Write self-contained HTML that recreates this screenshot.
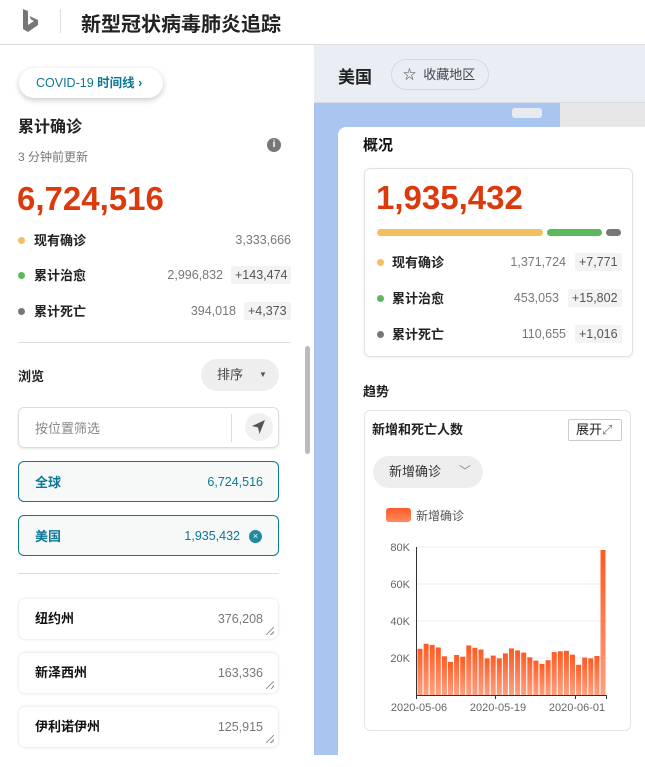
<!DOCTYPE html><html><head><meta charset="utf-8"><style>
*{margin:0;padding:0;box-sizing:border-box}
body{width:645px;height:755px;overflow:hidden;background:#fff;font-family:"Liberation Sans","Noto Sans CJK SC",sans-serif;position:relative;color:#111}
.a{position:absolute}
.hdr{left:0;top:0;width:645px;height:45px;border-bottom:1px solid #ddd;background:#fff}
.dot{display:inline-block;width:7px;height:7px;border-radius:50%;position:absolute;left:18px}
.lbl{position:absolute;font-size:13px;font-weight:bold;color:#222}
.num{position:absolute;font-size:12.5px;color:#777;text-align:right}
.dl{position:absolute;font-size:12.5px;color:#555;background:#f3f3f3;padding:2px 4px;border-radius:2px}
.box{position:absolute;border-radius:6px;background:#fff}
.rz{position:absolute;right:4px;bottom:4px;width:8px;height:8px;background:linear-gradient(135deg,transparent 45%,#999 45%,#999 55%,transparent 55%,transparent 75%,#999 75%,#999 85%,transparent 85%)}
</style></head><body>
<div class="a hdr">
<svg class="a" style="left:22px;top:9px" width="18" height="24" viewBox="0 0 18 24"><path d="M1 0 L6 2 V16 L12 12 L9 10.5 L7.5 7 L16 11 V16 L6 23 L1 20 Z" fill="#777"/></svg>
<div class="a" style="left:60px;top:9px;width:1px;height:24px;background:#ddd"></div>
<div class="a" style="left:81px;top:8px;font-size:20px;font-weight:bold;color:#222">新型冠状病毒肺炎追踪</div>
</div>
<div class="a" style="left:19px;top:68px;width:144px;height:30px;border-radius:15px;background:#fff;box-shadow:0 2px 6px rgba(0,0,0,.22);font-size:12.5px;color:#0b7894;line-height:30px;padding-left:17px;font-weight:bold"><span style="font-weight:normal">COVID-19</span> 时间线 ›</div>
<div class="a" style="left:18px;top:113px;font-size:16px;font-weight:bold;color:#222">累计确诊</div>
<div class="a" style="left:18px;top:148px;font-size:12px;color:#777">3 分钟前更新</div>
<div class="a" style="left:267px;top:138px;width:14px;height:14px;border-radius:50%;background:#777;color:#fff;font-size:10px;text-align:center;line-height:14px;font-weight:bold">i</div>
<div class="a" style="left:17px;top:180px;font-size:33px;font-weight:bold;color:#db3a0d">6,724,516</div>
<span class="dot" style="top:237px;background:#f2c063"></span><div class="lbl" style="left:34px;top:230px">现有确诊</div><div class="num" style="right:354px;top:233px">3,333,666</div>
<span class="dot" style="top:272px;background:#5cb85c"></span><div class="lbl" style="left:34px;top:265px">累计治愈</div><div class="num" style="right:422px;top:268px">2,996,832</div><div class="dl" style="left:231px;top:266px">+143,474</div>
<span class="dot" style="top:308px;background:#777"></span><div class="lbl" style="left:34px;top:301px">累计死亡</div><div class="num" style="right:409px;top:304px">394,018</div><div class="dl" style="left:244px;top:302px">+4,373</div>
<div class="a" style="left:18px;top:342px;width:272px;height:1px;background:#ddd"></div>
<div class="lbl" style="left:18px;top:366px">浏览</div>
<div class="a" style="left:201px;top:359px;width:78px;height:32px;border-radius:16px;background:#eee;font-size:13px;color:#444;line-height:32px;padding-left:16px">排序<span style="position:absolute;left:58px;top:0;font-size:8px;color:#555">▼</span></div>
<div class="box" style="left:18px;top:407px;width:261px;height:41px;border:1px solid #ddd;box-shadow:0 1px 2px rgba(0,0,0,.1)">
<div class="a" style="left:16px;top:10px;font-size:13px;color:#888">按位置筛选</div>
<div class="a" style="left:212px;top:6px;width:1px;height:28px;background:#ddd"></div>
<div class="a" style="left:226px;top:5px;width:28px;height:28px;border-radius:50%;background:#f0f0f0"><svg width="28" height="28" viewBox="0 0 28 28"><path d="M20 7 L7 13 L13 14.5 L14.5 21 Z" fill="#555"/></svg></div>
</div>
<div class="box" style="left:18px;top:461px;width:261px;height:41px;border:1px solid #0b7894;background:#f7f9f9"><div class="a" style="left:16px;top:10px;font-size:13px;font-weight:bold;color:#0b7894">全球</div><div class="a" style="right:15px;top:13px;font-size:12.5px;color:#0b7894">6,724,516</div></div>
<div class="box" style="left:18px;top:515px;width:261px;height:41px;border:1px solid #0b7894;background:#f7f9f9"><div class="a" style="left:16px;top:10px;font-size:13px;font-weight:bold;color:#0b7894">美国</div><div class="a" style="right:38px;top:13px;font-size:12.5px;color:#0b7894">1,935,432</div><div class="a" style="left:230px;top:14px;width:13px;height:13px;border-radius:50%;background:#1f8aa0;color:#fff;font-size:9px;text-align:center;line-height:13px">×</div></div>
<div class="a" style="left:18px;top:573px;width:261px;height:1px;background:#ddd"></div>
<div class="box" style="left:19px;top:599px;width:259px;height:40px;box-shadow:0 0 3px rgba(0,0,0,.15)"><div class="a" style="left:16px;top:9px;font-size:13px;font-weight:bold">纽约州</div><div class="a" style="right:15px;top:13px;font-size:12.5px;color:#777">376,208</div><div class="rz"></div></div>
<div class="box" style="left:19px;top:653px;width:259px;height:40px;box-shadow:0 0 3px rgba(0,0,0,.15)"><div class="a" style="left:16px;top:9px;font-size:13px;font-weight:bold">新泽西州</div><div class="a" style="right:15px;top:13px;font-size:12.5px;color:#777">163,336</div><div class="rz"></div></div>
<div class="box" style="left:19px;top:707px;width:259px;height:40px;box-shadow:0 0 3px rgba(0,0,0,.15)"><div class="a" style="left:16px;top:9px;font-size:13px;font-weight:bold">伊利诺伊州</div><div class="a" style="right:15px;top:13px;font-size:12.5px;color:#777">125,915</div><div class="rz"></div></div>
<div class="a" style="left:305px;top:346px;width:5px;height:108px;border-radius:3px;background:#bbb"></div>
<div class="a" style="left:314px;top:45px;width:331px;height:710px;background:#a9c6f1"></div>
<div class="a" style="left:314px;top:45px;width:331px;height:58px;background:#e9eef5;border-bottom:1px solid #d8dde4"></div>
<div class="a" style="left:560px;top:103px;width:85px;height:24px;background:#e6e7e6"></div>
<div class="a" style="left:512px;top:108px;width:30px;height:10px;background:#e9ecef;border-radius:3px"></div>
<div class="a" style="left:338px;top:63px;font-size:17px;font-weight:bold;color:#222">美国</div>
<div class="a" style="left:391px;top:59px;width:98px;height:31px;border-radius:16px;border:1px solid #d5d8dc;font-size:13px;color:#444;line-height:29px;padding-left:11px">☆&nbsp; 收藏地区</div>
<div class="a" style="left:338px;top:127px;width:320px;height:640px;background:#fff;border-radius:8px"></div>
<div class="a" style="left:363px;top:134px;font-size:15px;font-weight:bold;color:#111">概况</div>
<div class="box" style="left:364px;top:168px;width:269px;height:189px;border:1px solid #e2e2e2;box-shadow:0 1px 3px rgba(0,0,0,.06)">
<div class="a" style="left:11px;top:10px;font-size:33px;font-weight:bold;color:#db3a0d">1,935,432</div>
<div class="a" style="left:12px;top:60px;width:166px;height:7px;border-radius:4px;background:#f2c063"></div>
<div class="a" style="left:182px;top:60px;width:55px;height:7px;border-radius:4px;background:#5cb85c"></div>
<div class="a" style="left:241px;top:60px;width:15px;height:7px;border-radius:4px;background:#777"></div>
<span class="dot" style="left:12px;top:90px;background:#f2c063"></span><div class="lbl" style="left:27px;top:83px">现有确诊</div><div class="num" style="right:66px;top:86px">1,371,724</div><div class="dl" style="left:210px;top:84px">+7,771</div>
<span class="dot" style="left:12px;top:126px;background:#5cb85c"></span><div class="lbl" style="left:27px;top:119px">累计治愈</div><div class="num" style="right:73px;top:122px">453,053</div><div class="dl" style="left:203px;top:120px">+15,802</div>
<span class="dot" style="left:12px;top:162px;background:#777"></span><div class="lbl" style="left:27px;top:155px">累计死亡</div><div class="num" style="right:66px;top:158px">110,655</div><div class="dl" style="left:210px;top:156px">+1,016</div>
</div>
<div class="a" style="left:363px;top:381px;font-size:13px;font-weight:bold;color:#222">趋势</div>
<div class="box" style="left:364px;top:410px;width:267px;height:321px;border:1px solid #e4e4e4">
<div class="a" style="left:7px;top:8px;font-size:13px;font-weight:bold;color:#222">新增和死亡人数</div>
<div class="a" style="left:203px;top:8px;width:54px;height:22px;border:1px solid #ccc;border-radius:2px;font-size:13px;color:#222;line-height:20px;padding-left:7px">展开<span style="color:#777">⤢</span></div>
<div class="a" style="left:8px;top:45px;width:110px;height:32px;border-radius:16px;background:#eee;font-size:13px;color:#333;line-height:32px;padding-left:16px">新增确诊<span style="position:absolute;left:86px;top:-1px;color:#888;font-size:12px">﹀</span></div>
<div class="a" style="left:21px;top:97px;width:25px;height:14px;border-radius:3px;background:linear-gradient(#ff5a2a,#ff8a60)"></div>
<div class="a" style="left:51px;top:96px;font-size:12px;color:#555">新增确诊</div>
</div>
<svg class="a" style="left:380px;top:535px" width="250" height="185">
<defs><linearGradient id="g" x1="0" y1="0" x2="0" y2="1"><stop offset="0" stop-color="#ff5a22"/><stop offset="1" stop-color="#ffa080"/></linearGradient></defs>
<g font-family="Liberation Sans" font-size="11" fill="#666" text-anchor="end">
<text x="30" y="16">80K</text><text x="30" y="53">60K</text><text x="30" y="90">40K</text><text x="30" y="127">20K</text></g>
<g stroke="#eee"><line x1="37" y1="12" x2="227" y2="12"/><line x1="37" y1="49" x2="227" y2="49"/><line x1="37" y1="86" x2="227" y2="86"/><line x1="37" y1="123" x2="227" y2="123"/></g>
<g id="bars" fill="url(#g)"></g>
<g stroke="#333"><line x1="36.5" y1="12" x2="36.5" y2="160"/><line x1="36" y1="160.5" x2="227" y2="160.5"/><line x1="36.5" y1="160" x2="36.5" y2="164"/><line x1="115.5" y1="160" x2="115.5" y2="164"/><line x1="195.5" y1="160" x2="195.5" y2="164"/><line x1="226.5" y1="160" x2="226.5" y2="164"/></g>
<g font-family="Liberation Sans" font-size="11" fill="#666" text-anchor="middle"><text x="39" y="176">2020-05-06</text><text x="118" y="176">2020-05-19</text><text x="197" y="176">2020-06-01</text></g>
</svg>
<script>
var v=[25,27.7,27.1,25.7,20.9,17.9,21.6,20.7,26.8,25.5,24.6,19.8,21.3,19.8,22.5,25.2,24.1,22.9,20.4,18.6,16.8,18.8,23.2,23.6,23.9,21.8,16.3,20.2,19.8,21.1,78.4];
var g=document.getElementById('bars'),s='';
for(var i=0;i<v.length;i++){var h=v[i]*148/80;s+='<rect x="'+(37.5+i*6.1).toFixed(1)+'" y="'+(160-h).toFixed(1)+'" width="5" height="'+h.toFixed(1)+'"/>';}
g.innerHTML=s;
</script>
</body></html>
